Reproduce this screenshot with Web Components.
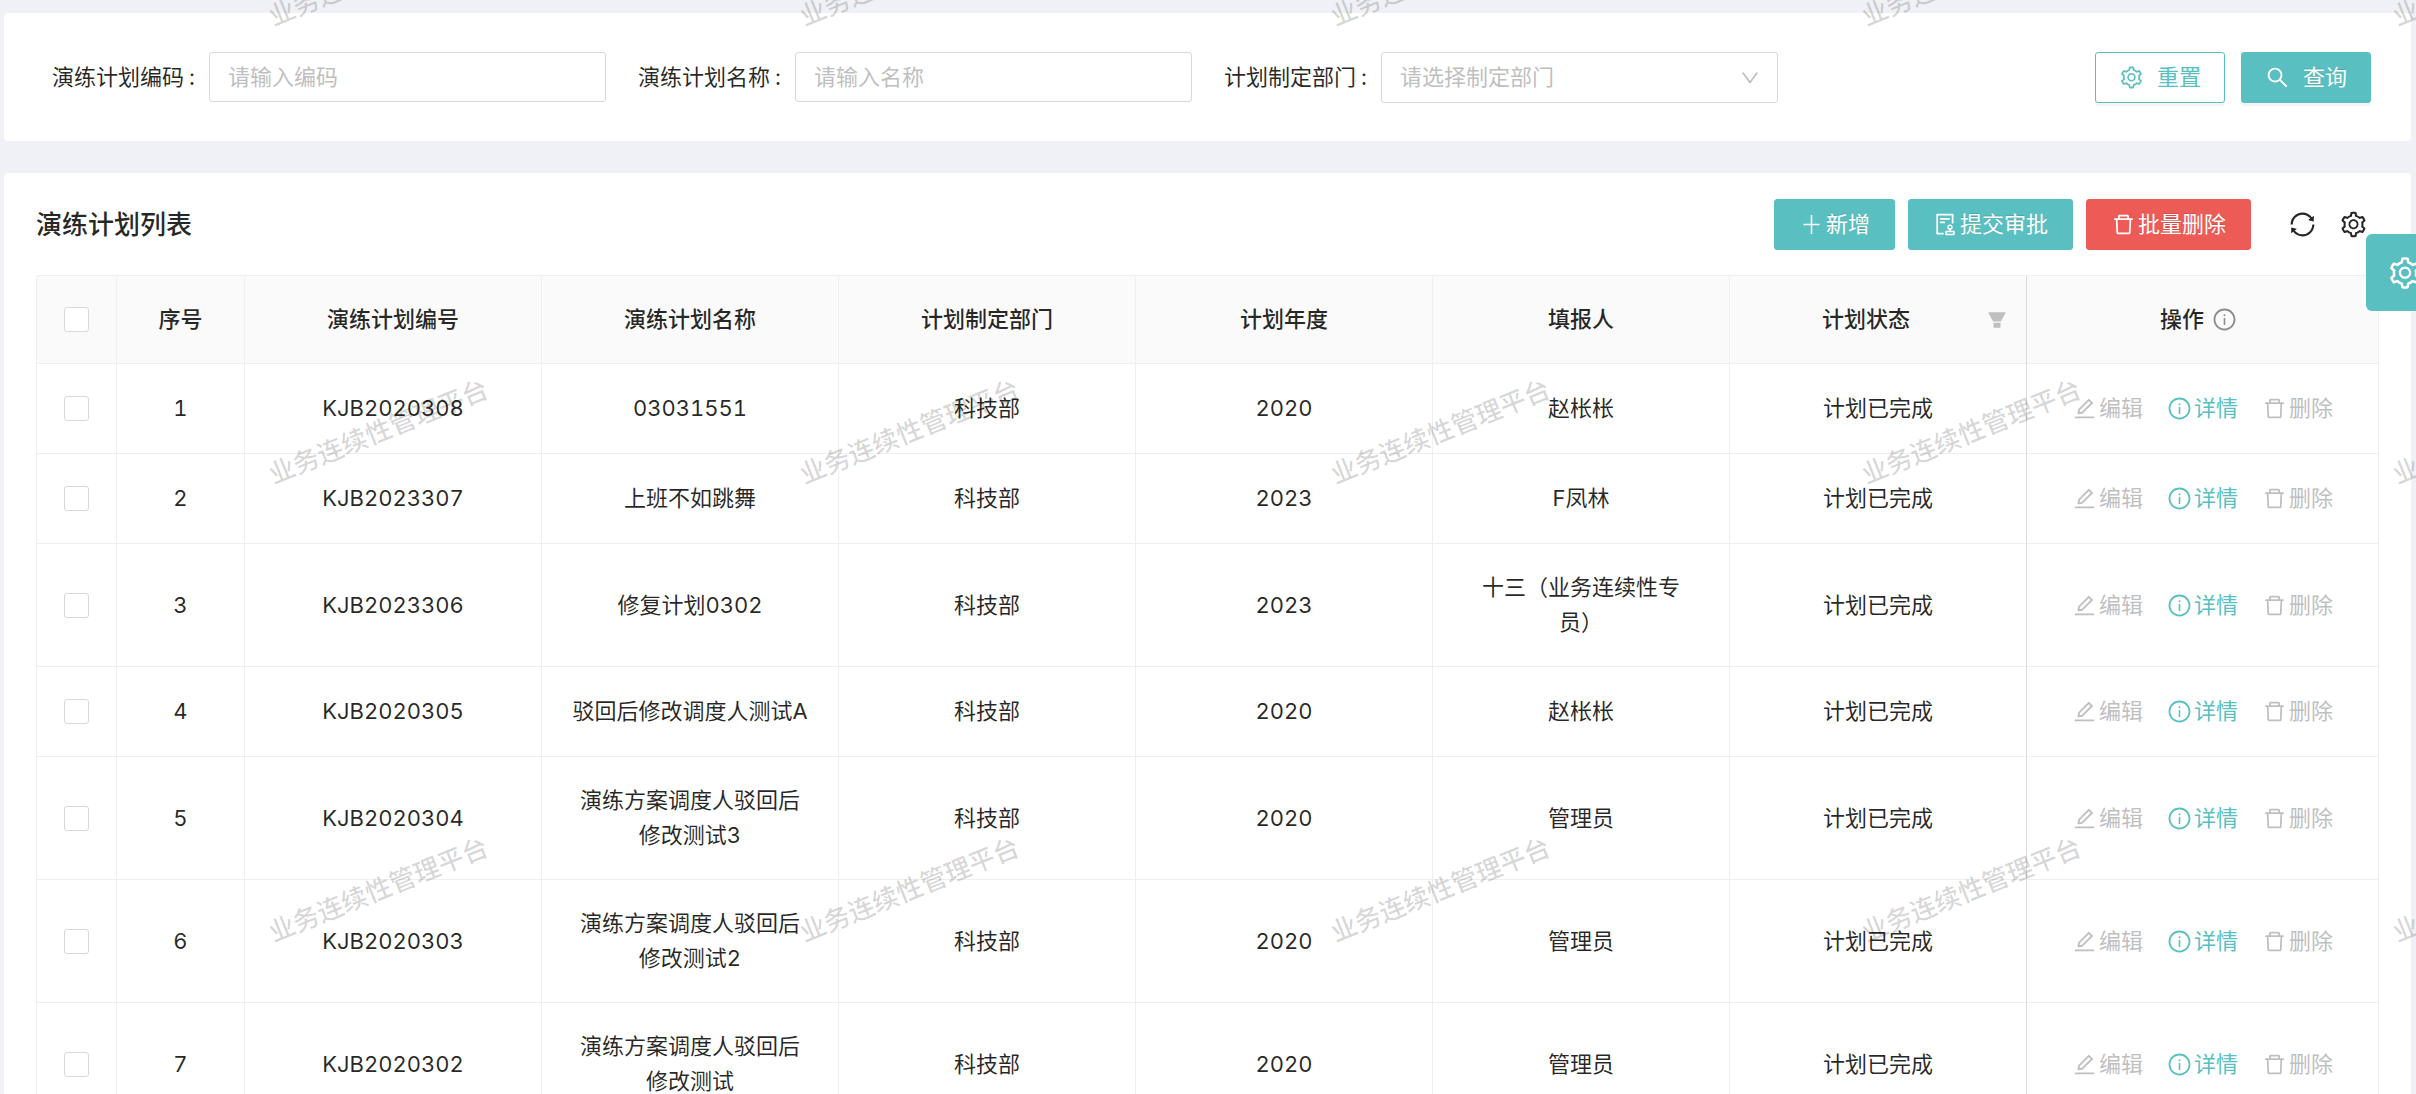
<!DOCTYPE html>
<html lang="zh-CN">
<head>
<meta charset="utf-8">
<title>演练计划</title>
<style>
  html, body { margin: 0; height: 100%; }
  body {
    --primary: #5abfc1;
    --danger: #ed5b56;
    --line: #efefef;
    --control-line: #d9d9d9;
    --muted: #bfbfbf;
    background: #f0f1f6;
    color: rgba(0, 0, 0, .85);
    font: 22px/35px Inter, "Noto Sans CJK SC", sans-serif;
    font-variant-numeric: tabular-nums;
    text-spacing-trim: space-all;
  }
</style>
</head>
<body>
<drill-app></drill-app>

<script>
const define = (name, html, setup) => {
  const template = document.createElement('template');
  template.innerHTML = html;
  customElements.define(name, class extends HTMLElement {
    connectedCallback() {
      if (this.shadowRoot) return;
      this.attachShadow({ mode: 'open' }).append(template.content.cloneNode(true));
      if (setup) setup(this, this.shadowRoot);
    }
  });
};

const ICONS = {
  setting: 'M924.8 625.7l-65.5-56c3.1-19 4.7-38.4 4.7-57.8s-1.6-38.8-4.7-57.8l65.5-56a32.03 32.03 0 009.3-35.2l-.9-2.6a443.74 443.74 0 00-79.7-137.9l-1.8-2.1a32.12 32.12 0 00-35.1-9.5l-81.3 28.9c-30-24.6-63.5-44-99.7-57.6l-15.7-85a32.05 32.05 0 00-25.8-25.7l-2.7-.5c-52.1-9.4-106.9-9.4-159 0l-2.7.5a32.05 32.05 0 00-25.8 25.7l-15.8 85.4a351.86 351.86 0 00-99 57.4l-81.9-29.1a32 32 0 00-35.1 9.5l-1.8 2.1a446.02 446.02 0 00-79.7 137.9l-.9 2.6c-4.5 12.5-.8 26.5 9.3 35.2l66.3 56.6c-3.1 18.8-4.6 38-4.6 57.1 0 19.2 1.5 38.4 4.6 57.1L99 625.5a32.03 32.03 0 00-9.3 35.2l.9 2.6c18.1 50.4 44.9 96.9 79.7 137.9l1.8 2.1a32.12 32.12 0 0035.1 9.5l81.9-29.1c29.8 24.5 63.1 43.9 99 57.4l15.8 85.4a32.05 32.05 0 0025.8 25.7l2.7.5a449.4 449.4 0 00159 0l2.7-.5a32.05 32.05 0 0025.8-25.7l15.7-85a350 350 0 0099.7-57.6l81.3 28.9a32 32 0 0035.1-9.5l1.8-2.1c34.8-41.1 61.6-87.5 79.7-137.9l.9-2.6c4.5-12.3.8-26.3-9.3-35zM788.3 465.9c2.5 15.1 3.8 30.6 3.8 46.1s-1.3 31-3.8 46.1l-6.6 40.1 74.7 63.9a370.03 370.03 0 01-42.6 73.6L721 702.8l-31.4 25.8c-23.9 19.6-50.5 35-79.3 45.8l-38.1 14.3-17.9 97a377.5 377.5 0 01-85 0l-17.9-97.2-37.8-14.5c-28.5-10.8-55-26.2-78.7-45.7l-31.4-25.9-93.4 33.2c-17-22.9-31.2-47.6-42.6-73.6l75.5-64.5-6.5-40c-2.4-14.9-3.7-30.3-3.7-45.5 0-15.3 1.2-30.6 3.7-45.5l6.5-40-75.5-64.5c11.3-26.1 25.6-50.7 42.6-73.6l93.4 33.2 31.4-25.9c23.7-19.5 50.2-34.9 78.7-45.7l37.9-14.3 17.9-97.2c28.1-3.2 56.8-3.2 85 0l17.9 97 38.1 14.3c28.7 10.8 55.4 26.2 79.3 45.8l31.4 25.8 92.8-32.9c17 22.9 31.2 47.6 42.6 73.6L781.8 426l6.5 39.9zM512 326c-97.2 0-176 78.8-176 176s78.8 176 176 176 176-78.8 176-176-78.8-176-176-176zm79.2 255.2A111.6 111.6 0 01512 614c-29.9 0-58-11.7-79.2-32.8A111.6 111.6 0 01400 502c0-29.9 11.7-58 32.8-79.2C454 401.6 482.1 390 512 390c29.9 0 58 11.6 79.2 32.8A111.6 111.6 0 01624 502c0 29.9-11.7 58-32.8 79.2z',
  search: 'M909.6 854.5L649.9 594.8C690.2 542.7 712 479 712 412c0-80.2-31.3-155.4-87.9-212.1-56.6-56.7-132-87.9-212.1-87.9s-155.5 31.3-212.1 87.9C143.2 256.5 112 331.8 112 412c0 80.1 31.3 155.5 87.9 212.1C256.5 680.8 331.8 712 412 712c67 0 130.6-21.8 182.7-62l259.7 259.6a8.2 8.2 0 0011.6 0l43.6-43.5a8.2 8.2 0 000-11.6zM570.4 570.4C528 612.7 471.8 636 412 636s-116-23.3-158.4-65.6C211.3 528 188 471.8 188 412s23.3-116.1 65.6-158.4C296 211.3 352.2 188 412 188s116.1 23.2 158.4 65.6S636 352.2 636 412s-23.3 116.1-65.6 158.4z',
  info: 'M512 64C264.6 64 64 264.6 64 512s200.6 448 448 448 448-200.6 448-448S759.4 64 512 64zm0 820c-205.4 0-372-166.6-372-372s166.6-372 372-372 372 166.6 372 372-166.6 372-372 372zM472 336a40 40 0 1080 0 40 40 0 10-80 0zm64 112h-48c-4.4 0-8 3.6-8 8v272c0 4.4 3.6 8 8 8h48c4.4 0 8-3.6 8-8V456c0-4.4-3.6-8-8-8z',
  plus: 'M480 120h64v360h296v64H544v360h-64V544H184v-64h296z',
  audit: 'M296 250c-4.4 0-8 3.6-8 8v48c0 4.4 3.6 8 8 8h384c4.4 0 8-3.6 8-8v-48c0-4.4-3.6-8-8-8H296zm184 144H296c-4.4 0-8 3.6-8 8v48c0 4.4 3.6 8 8 8h184c4.4 0 8-3.6 8-8v-48c0-4.4-3.6-8-8-8zm-48 458H208V148h560v320c0 4.4 3.6 8 8 8h56c4.4 0 8-3.6 8-8V108c0-17.7-14.3-32-32-32H168c-17.7 0-32 14.3-32 32v784c0 17.7 14.3 32 32 32h264c4.4 0 8-3.6 8-8v-56c0-4.4-3.6-8-8-8zm440-88H728v-36.6c46.3-13.8 80-56.6 80-107.4 0-61.9-50.1-112-112-112s-112 50.1-112 112c0 50.7 33.7 93.6 80 107.4V764H520c-8.8 0-16 7.2-16 16v152c0 8.8 7.2 16 16 16h352c8.8 0 16-7.2 16-16V780c0-8.8-7.2-16-16-16zM646 620c0-27.6 22.4-50 50-50s50 22.4 50 50-22.4 50-50 50-50-22.4-50-50zm180 266H566v-60h260v60z',
  trash: 'M360 184h-8c4.4 0 8-3.6 8-8v8h304v-8c0 4.4 3.6 8 8 8h-8v72h72v-80c0-35.3-28.7-64-64-64H352c-35.3 0-64 28.7-64 64v80h72v-72zm504 72H160c-17.7 0-32 14.3-32 32v32c0 4.4 3.6 8 8 8h60.4l24.7 523c1.6 34.1 29.8 61 63.9 61h454c34.2 0 62.3-26.8 63.9-61l24.7-523H888c4.4 0 8-3.6 8-8v-32c0-17.7-14.3-32-32-32zM731.3 840H292.7l-24.2-512h487l-24.2 512z',
  edit: 'M257.7 752c2 0 4-.2 6-.5L431.9 722c2-.4 3.9-1.3 5.3-2.8l423.9-423.9a9.96 9.96 0 000-14.1L694.9 114.9c-1.9-1.9-4.4-2.9-7.1-2.9s-5.2 1-7.1 2.9L256.8 538.8c-1.5 1.5-2.4 3.3-2.8 5.3l-29.5 168.2a33.5 33.5 0 009.4 29.8c6.6 6.4 14.9 9.9 23.8 9.9zm67.4-174.4L687.8 215l73.3 73.3-362.7 362.6-88.9 15.7 15.6-89zM880 836H144c-17.7 0-32 14.3-32 32v36c0 4.4 3.6 8 8 8h784c4.4 0 8-3.6 8-8v-36c0-17.7-14.3-32-32-32z',
  sync: 'M168 504.2c1-43.7 10-86.1 26.9-126 17.3-41 42.1-77.7 73.7-109.4S337 212.3 378 195c42.4-17.9 87.4-27 133.9-27s91.5 9.1 133.8 27A341.5 341.5 0 01755 268.8c9.9 9.9 19.2 20.4 27.8 31.4l-60.2 47a8 8 0 003 14.1l175.7 43c5 1.2 9.9-2.6 9.9-7.7l.8-180.9c0-6.7-7.7-10.5-12.9-6.3l-56.4 44.1C765.8 155.1 646.2 92 511.8 92 282.7 92 96.3 275.6 92 503.8a8 8 0 008 8.2h60c4.4 0 7.9-3.5 8-7.8zm756 7.8h-60c-4.4 0-7.9 3.5-8 7.8-1 43.7-10 86.1-26.9 126-17.3 41-42.1 77.8-73.7 109.4A342.45 342.45 0 01512.1 856a342.24 342.24 0 01-243.2-100.8c-9.9-9.9-19.2-20.4-27.8-31.4l60.2-47a8 8 0 00-3-14.1l-175.7-43c-5-1.2-9.9 2.6-9.9 7.7l-.7 181c0 6.7 7.7 10.5 12.9 6.3l56.4-44.1C258.2 868.9 377.8 932 512.2 932c229.2 0 415.5-183.7 419.8-411.8a8 8 0 00-8-8.2z',
  filter: 'M349 838c0 17.7 14.2 32 31.8 32h262.4c17.6 0 31.8-14.3 31.8-32V642H349v196zm531.1-684H143.9c-24.5 0-39.8 26.7-27.5 48l221.3 376h348.8l221.3-376c12.1-21.3-3.2-48-27.7-48z',
  down: 'M884 256h-75c-5.100 0-9.900 2.500-12.900 6.600L512 654.200 227.900 262.600c-3-4.100-7.800-6.600-12.900-6.600h-75c-6.500 0-10.300 7.400-6.500 12.700l352.600 486.100c12.800 17.600 39 17.600 51.700 0l352.600-486.100c3.900-5.300.1-12.700-6.400-12.700z'
};

/* Icon: <ui-icon name="…">, sized with --size */
define('ui-icon', `
  <style>
    :host { display: inline-flex; flex: none; width: var(--size, 25px); height: var(--size, 25px); }
    svg { width: 100%; height: 100%; fill: currentColor; }
  </style>
  <svg viewBox="0 0 1024 1024" aria-hidden="true"><path/></svg>`,
  (host, root) => root.querySelector('path').setAttribute('d', ICONS[host.getAttribute('name')]));

/* Button: variants via the "kind" attribute */
define('ui-button', `
  <style>
    :host { display: inline-flex; }
    button {
      display: flex; align-items: center; gap: 2px; height: 51px; padding: 0 24px;
      box-sizing: border-box; border: 1px solid var(--primary); border-radius: 3px;
      background: var(--primary); color: #fff; font: inherit; cursor: pointer;
      text-shadow: 0 -1px 0 rgba(0, 0, 0, .12);
    }
    :host([kind~="danger"]) button { background: var(--danger); border-color: var(--danger); }
    :host([kind~="ghost"]) button { background: #fff; color: var(--primary); text-shadow: none; }
    :host([kind~="form"]) button { gap: 13px; padding: 0 23px; box-shadow: 0 3px 0 rgba(0, 0, 0, .045); }
  </style>
  <button type="button"><ui-icon></ui-icon><slot></slot></button>`,
  (host, root) => {
    const icon = document.createElement('ui-icon');
    icon.setAttribute('name', host.getAttribute('icon'));
    root.querySelector('ui-icon').replaceWith(icon);
  });

/* White card */
define('ui-panel', `
  <style>:host { display: block; background: #fff; border-radius: 4px; }</style>
  <slot></slot>`);

/* Labelled form field: text box or drop-down */
const FIELD_STYLE = `
  <style>
    :host { display: flex; align-items: flex-start; min-width: 0; }
    label { line-height: 51px; white-space: nowrap; }
    label::after { content: ":"; margin: 0 14px 0 5px; }
    input, select {
      flex: 1; min-width: 0; width: 100%; height: 50px; box-sizing: border-box; margin: 0; padding: 0 18px;
      border: 1px solid var(--control-line); border-radius: 3px; background: #fff;
      font: inherit; color: inherit; appearance: none; outline: none;
    }
    input::placeholder { color: var(--muted); opacity: 1; }
    .picker { flex: 1; min-width: 0; display: grid; align-items: center; }
    .picker > * { grid-area: 1 / 1; }
    .picker select { height: 51px; color: var(--muted); }
    .picker ui-icon { --size: 22px; justify-self: end; margin-right: 17px; color: var(--muted); pointer-events: none; }
  </style>`;
define('text-field', `${FIELD_STYLE}<label for="f"></label><input id="f" type="text">`, (host, root) => {
  root.querySelector('label').textContent = host.getAttribute('label');
  root.querySelector('input').placeholder = host.getAttribute('placeholder');
});
define('select-field', `${FIELD_STYLE}<label for="f"></label>
  <div class="picker"><select id="f"><option value=""></option></select><ui-icon name="down"></ui-icon></div>`, (host, root) => {
  root.querySelector('label').textContent = host.getAttribute('label');
  root.querySelector('option').textContent = host.getAttribute('placeholder');
});

define('search-form', `
  <style>
    :host { display: block; padding: 39px 40px 38px 48px; }
    form { display: grid; grid-template-columns: repeat(3, minmax(0, 554fr)) minmax(0, 561fr); gap: 32px; }
    .actions { display: flex; justify-content: flex-end; gap: 16px; }
  </style>
  <form>
    <text-field label="演练计划编码" placeholder="请输入编码"></text-field>
    <text-field label="演练计划名称" placeholder="请输入名称"></text-field>
    <select-field label="计划制定部门" placeholder="请选择制定部门"></select-field>
    <div class="actions">
      <ui-button kind="ghost form" icon="setting">重置</ui-button>
      <ui-button kind="form" icon="search">查询</ui-button>
    </div>
  </form>`);

define('table-toolbar', `
  <style>
    :host { display: flex; align-items: center; padding: 26px 11px 25px 0; }
    h2 { margin: 0 auto 0 0; font-size: 26px; font-weight: 500; line-height: 40px; }
    .buttons { display: flex; gap: 13px; margin-right: 37px; }
    .tools { display: flex; gap: 22px; }
    .tools button { display: flex; padding: 0; border: 0; background: none; color: inherit; cursor: pointer; }
    .tools ui-icon { --size: 29px; }
  </style>
  <h2>演练计划列表</h2>
  <div class="buttons">
    <ui-button icon="plus">新增</ui-button>
    <ui-button icon="audit">提交审批</ui-button>
    <ui-button kind="danger" icon="trash">批量删除</ui-button>
  </div>
  <div class="tools">
    <button type="button" aria-label="刷新"><ui-icon name="sync"></ui-icon></button>
    <button type="button" aria-label="列设置"><ui-icon name="setting"></ui-icon></button>
  </div>`);

define('row-actions', `
  <style>
    :host { display: flex; justify-content: center; gap: 24px; height: 37px; }
    button {
      display: flex; align-items: center; gap: 2px; padding: 0; border: 0; background: none;
      font: inherit; color: var(--primary); cursor: pointer;
    }
    button:disabled { color: var(--muted); cursor: not-allowed; }
  </style>
  <button type="button" disabled><ui-icon name="edit"></ui-icon>编辑</button>
  <button type="button"><ui-icon name="info"></ui-icon>详情</button>
  <button type="button" disabled><ui-icon name="trash"></ui-icon>删除</button>`);

const ROWS = [
  ['KJB2020308', '03031551', '2020', '赵枨枨'],
  ['KJB2023307', '上班不如跳舞', '2023', 'F凤林'],
  ['KJB2023306', '修复计划0302', '2023', '十三（业务连续性专员）'],
  ['KJB2020305', '驳回后修改调度人测试A', '2020', '赵枨枨'],
  ['KJB2020304', '演练方案调度人驳回后修改测试3', '2020', '管理员'],
  ['KJB2020303', '演练方案调度人驳回后修改测试2', '2020', '管理员'],
  ['KJB2020302', '演练方案调度人驳回后修改测试', '2020', '管理员']
];

define('plan-table', `
  <style>
    :host { display: block; }
    table {
      width: 100%; table-layout: fixed; border-collapse: separate; border-spacing: 0;
      border: solid var(--line); border-width: 1px 0 0 1px; border-radius: 3px 3px 0 0;
    }
    .check { width: 80px; } .index { width: 128px; } .action { width: 352px; }
    th, td {
      box-sizing: border-box; padding: 26px 28px; text-align: center; vertical-align: middle;
      border: solid var(--line); border-width: 0 1px 1px 0; overflow-wrap: break-word;
    }
    th { background: #fafafa; font-weight: 500; }
    th:nth-child(8), td:nth-child(8) { border-right-color: #dcdcdc; }
    th:nth-child(8) { padding: 26px 18px 26px 28px; }
    td:last-child { padding-left: 0; padding-right: 0; }
    .check-cell { padding: 0; line-height: 0; }
    input {
      appearance: none; width: 25px; height: 25px; margin: 0; box-sizing: border-box;
      border: 1px solid var(--control-line); border-radius: 3px; background: #fff; vertical-align: middle;
    }
    .head { display: flex; align-items: center; justify-content: center; gap: 12px; }
    .head.status span { flex: 1; }
    .head.status ui-icon { --size: 22px; color: var(--muted); }
    .head.ops { gap: 8px; margin-right: 8px; }
    .head.ops ui-icon { color: #8c8c8c; }
  </style>
  <table>
    <colgroup><col class="check"><col class="index"><col><col><col><col><col><col><col class="action"></colgroup>
    <thead><tr>
      <th class="check-cell"><input type="checkbox" aria-label="全选"></th>
      <th>序号</th><th>演练计划编号</th><th>演练计划名称</th><th>计划制定部门</th><th>计划年度</th><th>填报人</th>
      <th><div class="head status"><span>计划状态</span><ui-icon name="filter"></ui-icon></div></th>
      <th><div class="head ops"><span>操作</span><ui-icon name="info"></ui-icon></div></th>
    </tr></thead>
    <tbody></tbody>
  </table>`,
  (host, root) => {
    root.querySelector('tbody').innerHTML = ROWS.map(([code, name, year, person], i) => `
      <tr>
        <td class="check-cell"><input type="checkbox" aria-label="选择 ${code}"></td>
        <td>${i + 1}</td><td>${code}</td><td>${name}</td><td>科技部</td><td>${year}</td><td>${person}</td>
        <td>计划已完成</td><td><row-actions></row-actions></td>
      </tr>`).join('');
  });

/* Tiled watermark laid over the whole page */
define('water-mark', `
  <style>
    :host { position: absolute; inset: 0; overflow: hidden; pointer-events: none; }
    .tiles {
      display: grid; grid-template-columns: repeat(5, 531px); grid-auto-rows: 458px;
      margin: -428px 0 0 275px; align-items: end;
      font-size: 26px; font-weight: 500; line-height: 26px; color: rgba(0, 0, 0, .16);
    }
    span { justify-self: start; white-space: nowrap; transform: rotate(-22deg); transform-origin: 0 100%; }
  </style>
  <div class="tiles" aria-hidden="true"></div>`,
  (host, root) => {
    const text = host.getAttribute('text');
    root.querySelector('.tiles').innerHTML = `<span>${text}</span>`.repeat(15);
  });

/* Settings handle stuck to the right edge of the window */
define('setting-handle', `
  <style>
    :host { position: absolute; right: -27px; top: 234px; }
    button {
      display: flex; align-items: center; justify-content: center; width: 77px; height: 77px; padding: 0;
      border: 0; border-radius: 6px 0 0 6px; background: var(--primary); color: #fff; cursor: pointer;
    }
    ui-icon { --size: 36px; }
  </style>
  <button type="button" aria-label="主题设置"><ui-icon name="setting"></ui-icon></button>`);

define('drill-app', `
  <style>
    :host { display: block; position: relative; height: 100vh; overflow: hidden; }
    main { display: flex; flex-direction: column; gap: 32px; padding: 13px 5px 0 4px; }
    .list { padding: 0 32px; }
  </style>
  <main>
    <ui-panel><search-form></search-form></ui-panel>
    <ui-panel><div class="list"><table-toolbar></table-toolbar><plan-table></plan-table></div></ui-panel>
  </main>
  <water-mark text="业务连续性管理平台"></water-mark>
  <setting-handle></setting-handle>`);
</script>
</body>
</html>
